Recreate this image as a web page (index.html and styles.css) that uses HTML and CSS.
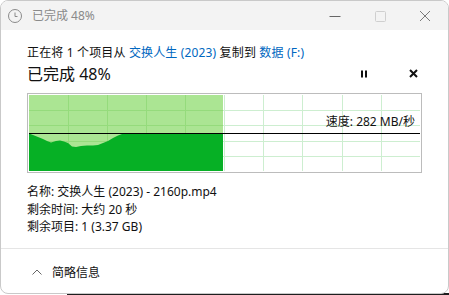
FILE: index.html
```html
<!DOCTYPE html>
<html lang="zh-CN">

<head>
    <meta charset="UTF-8">
    <title>已完成 48%</title>
    <link rel="stylesheet" href="styles.css">
</head>

<body>
    <div class="window">
        <div class="titlebar">
            <svg class="clock" width="16" height="16" viewBox="0 0 16 16">
                <circle cx="8" cy="8" r="6.5" fill="none" stroke="#8a8a8a" stroke-width="1" />
                <path d="M8 4.5 V8.5 H10.5" fill="none" stroke="#8a8a8a" stroke-width="1" />
            </svg>
            <span class="title">已完成 48%</span>
            <div class="caption-buttons">
                <svg width="12" height="12" viewBox="0 0 12 12"><path d="M0.5 6.5 H11.5" stroke="#666" stroke-width="1" /></svg>
                <svg width="12" height="12" viewBox="0 0 12 12"><rect x="1.5" y="1.5" width="10" height="10" rx="1" fill="none" stroke="#cfcfcf" stroke-width="1" /></svg>
                <svg width="12" height="12" viewBox="0 0 12 12"><path d="M1 1 L11 11 M11 1 L1 11" stroke="#7a7a7a" stroke-width="1" /></svg>
            </div>
        </div>

        <div class="content">
            <div class="summary">正在将 1 个项目从 <span class="link">交换人生 (2023)</span> 复制到 <span class="link">数据 (F:)</span></div>
            <div class="status-row">
                <span class="status">已完成 48%</span>
                <svg class="pause" width="8" height="8" viewBox="0 0 8 8"><rect x="1" y="0.5" width="2" height="7" fill="#111" /><rect x="5" y="0.5" width="2" height="7" fill="#111" /></svg>
                <svg class="stop" width="9" height="9" viewBox="0 0 9 9"><path d="M1 1 L8 8 M8 1 L1 8" stroke="#111" stroke-width="2" /></svg>
            </div>

            <div class="chart">
                <svg width="391" height="76" viewBox="0 0 391 76">
                    <rect x="0" y="0" width="194" height="76" fill="#abe593" />
                    <g stroke="#cdeed0" stroke-width="1">
                        <path d="M195.5 0 V76 M234.5 0 V76 M273.5 0 V76 M313.5 0 V76 M352.5 0 V76" />
                        <path d="M194 15.5 H391 M194 30.5 H391 M194 46.5 H391 M194 61.5 H391" />
                    </g>
                    <g stroke="#95db7c" stroke-width="1">
                        <path d="M39.5 0 V76 M78.5 0 V76 M117.5 0 V76 M156.5 0 V76" />
                        <path d="M0 15.5 H194 M0 30.5 H194 M0 46.5 H194 M0 61.5 H194" />
                    </g>
                    <polygon fill="#06b025"
                        points="0,38.5 4,40 9,42 14,44 18,46 22,47.5 27,46 31,45.5 35,46.5 39,48 43,51.5 47,52 52,51 58,50.5 64,50.5 69,50 74,48 79,46 84,43 89,40.5 93,39 194,39 194,76 0,76" />
                    <path d="M0 38.5 H391" stroke="#000" stroke-width="1.2" />
                </svg>
                <div class="speed">速度: 282 MB/秒</div>
            </div>

            <div class="details">
                <div>名称: 交换人生 (2023) - 2160p.mp4</div>
                <div>剩余时间: 大约 20 秒</div>
                <div>剩余项目: 1 (3.37 GB)</div>
            </div>
        </div>

        <div class="footer">
            <svg class="chevron" width="10" height="6" viewBox="0 0 10 6"><path d="M0.5 5.5 L5 1 L9.5 5.5" fill="none" stroke="#666" stroke-width="1" /></svg>
            <span>简略信息</span>
        </div>
    </div>
</body>

</html>
```

FILE: styles.css
```css
html,
body {
    margin: 0;
    height: 295px;
}

body {
    font-family: "Noto Sans", "Noto Sans CJK SC", sans-serif;
    font-size: 12px;
    color: #111111;
    background: #ffffff linear-gradient(to right, #ffffff 67px, #1e1e1e 67px) no-repeat left bottom / 100% 2px;
    overflow: hidden;
}

.window {
    box-sizing: border-box;
    width: 449px;
    height: 294px;
    border: 1px solid #c9c9c9;
    border-radius: 8px;
    background-color: #ffffff;
    overflow: hidden;
    display: flex;
    flex-direction: column;
}

.titlebar {
    height: 29px;
    background-color: #f3f3f3;
    display: flex;
    align-items: center;
    padding-left: 6px;
    flex-shrink: 0;
}

.clock {
    margin-right: 9px;
}

.title {
    color: #8a8a8a;
    line-height: 16px;
}

.caption-buttons {
    margin-left: auto;
    display: flex;
    gap: 33px;
    padding-right: 17px;
}

.content {
    padding: 14px 0 0 26px;
    flex: 1;
}

.summary {
    line-height: 18px;
    letter-spacing: 0.15px;
}

.link {
    color: #0067c0;
}

.status-row {
    display: flex;
    align-items: center;
    height: 23px;
    margin-bottom: 8px;
}

.status {
    font-size: 16px;
    line-height: 20px;
}

.pause {
    margin-left: auto;
}

.stop {
    margin-left: 41px;
    margin-right: 30px;
}

.chart {
    position: relative;
    width: 391px;
    height: 76px;
    border: 1px solid #bcbcbc;
    padding: 1px;
}

.chart svg {
    display: block;
}

.speed {
    position: absolute;
    right: 6px;
    top: 20px;
    line-height: 16px;
}

.details {
    margin-top: 10px;
    line-height: 17.5px;
}

.footer {
    height: 43px;
    border-top: 1px solid #e5e5e5;
    display: flex;
    align-items: center;
    padding-left: 31px;
    padding-top: 1px;
    flex-shrink: 0;
}

.chevron {
    margin-right: 10px;
}
```
